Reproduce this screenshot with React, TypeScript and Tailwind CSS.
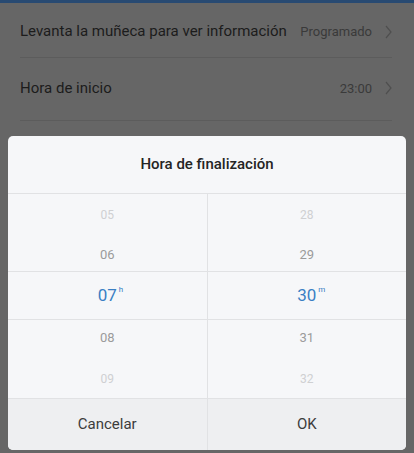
import React from "react";

const font = { fontFamily: "Roboto, 'Noto Sans', Arial, sans-serif" };

function Chevron() {
  return (
    <svg width="7" height="14" viewBox="0 0 7 14" className="ml-[13px]">
      <path d="M1 1l5 6-5 6" fill="none" stroke="#4f4f4f" strokeWidth="1.2" />
    </svg>
  );
}

function SettingRow({ label, value, className }: { label: string; value: string; className: string }) {
  return (
    <div className={`ml-[20px] mr-[22px] flex border-b border-[#5c5c5c] ${className}`}>
      <div className="flex w-full items-center">
        <span className="flex-1 text-[15px] text-[#1c1c1c]">{label}</span>
        <span className="text-[13px] text-[#3a3a3a]">{value}</span>
        <Chevron />
      </div>
    </div>
  );
}

function Column({ items, selected, unit }: { items: string[]; selected: string; unit: string }) {
  return (
    <div className="flex flex-1 flex-col">
      <div className="flex h-[38px] items-end justify-center pb-[8px] text-[12px] text-[#cfd0d2]">{items[0]}</div>
      <div className="flex h-[39px] items-center justify-center pt-[6px] text-[13px] text-[#9b9b9b]">{items[1]}</div>
      <div className="flex h-[49px] items-center justify-center border-y border-[#e1e2e4] text-[#3a7fc4]">
        <span className="relative text-[17px]">
          {selected}
          <span className="absolute left-full top-[1px] ml-[2px] text-[8px]">{unit}</span>
        </span>
      </div>
      <div className="flex h-[39px] items-center justify-center pb-[4px] text-[13px] text-[#9b9b9b]">{items[2]}</div>
      <div className="flex h-[39px] items-start justify-center pt-[11px] text-[12px] text-[#cfd0d2]">{items[3]}</div>
    </div>
  );
}

export default function App() {
  return (
    <div style={font} className="flex h-[453px] w-[414px] flex-col bg-[#666666]">
      <div className="h-[3px] bg-[#284a72]" />
      <div className="pb-[15px]">
        <SettingRow
          label="Levanta la muñeca para ver información"
          value="Programado"
          className="h-[55px] pt-[3px] items-center"
        />
        <SettingRow label="Hora de inicio" value="23:00" className="h-[63px] pt-[19px] items-start" />
      </div>

      {/* Dialog */}
      <div className="mx-[8px] flex flex-col overflow-hidden rounded-[5px] bg-[#f6f7f9]">
        <div className="flex h-[58px] items-center justify-center border-b border-[#e1e2e4] text-[15px] font-medium text-[#242424]">
          Hora de finalización
        </div>
        <div className="flex">
          <Column items={["05", "06", "08", "09"]} selected="07" unit="h" />
          <div className="w-px bg-[#e1e2e4]" />
          <Column items={["28", "29", "31", "32"]} selected="30" unit="m" />
        </div>
        <div className="flex h-[52px] border-t border-[#e1e2e4] bg-[#eeeff1] text-[15px] text-[#3c3c3c]">
          <button className="flex flex-1 items-center justify-center">Cancelar</button>
          <div className="w-px bg-[#e1e2e4]" />
          <button className="flex flex-1 items-center justify-center">OK</button>
        </div>
      </div>
    </div>
  );
}
